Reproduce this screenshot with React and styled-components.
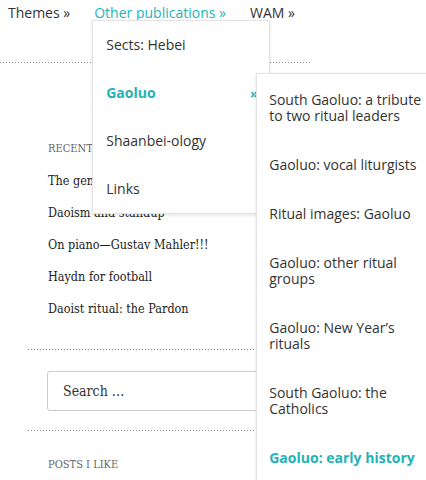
import styled, { createGlobalStyle } from 'styled-components';

const GlobalStyle = createGlobalStyle`
  html, body {
    margin: 0;
    padding: 0;
    background: #fff;
  }
  body {
    width: 426px;
    height: 480px;
    overflow: hidden;
  }
`;

const teal = '#1fb3b6';
const serif = `'DejaVu Serif Condensed', 'DejaVu Serif', serif`;

const recent = [
  'The genius of Li Manshan',
  'Daoism and standup',
  'On piano—Gustav Mahler!!!',
  'Haydn for football',
  'Daoist ritual: the Pardon',
];

const gaoluo = [
  'South Gaoluo: a tribute to two ritual leaders',
  'Gaoluo: vocal liturgists',
  'Ritual images: Gaoluo',
  'Gaoluo: other ritual groups',
  'Gaoluo: New Year’s rituals',
  'South Gaoluo: the Catholics',
  'Gaoluo: early history',
];

const App = () => {
  return (
    <>
      <GlobalStyle />
      <Page>
        <Header>
          <Nav>
            <NavItem>Themes »</NavItem>
            <NavItem $active>
              Other publications »
              <Dropdown>
                <MenuItem>Sects: Hebei</MenuItem>
                <MenuItem $active>
                  Gaoluo <span>»</span>
                  <SubMenu>
                    {gaoluo.map((t, i) => (
                      <SubItem key={t} $active={i === gaoluo.length - 1}>
                        {t}
                      </SubItem>
                    ))}
                  </SubMenu>
                </MenuItem>
                <MenuItem>Shaanbei-ology</MenuItem>
                <MenuItem>Links</MenuItem>
              </Dropdown>
            </NavItem>
            <NavItem>WAM »</NavItem>
          </Nav>
        </Header>
        <Sidebar>
          <Widget>
            <WidgetTitle>Recent Posts</WidgetTitle>
            <PostList>
              {recent.map((t) => (
                <li key={t}>{t}</li>
              ))}
            </PostList>
          </Widget>
          <Rule />
          <SearchWidget>
            <SearchInput placeholder="Search …" />
          </SearchWidget>
          <Rule />
          <Widget>
            <WidgetTitle>Posts I Like</WidgetTitle>
          </Widget>
        </Sidebar>
      </Page>
    </>
  );
};

const Page = styled.div`
  position: relative;
  width: 426px;
  height: 480px;
  overflow: hidden;
`;

const Header = styled.header`
  width: 312px;
  height: 63px;
  background-image: linear-gradient(to right, #8a8a8a 1px, transparent 1px);
  background-size: 3px 1px;
  background-repeat: repeat-x;
  background-position: 0 bottom;
`;

const Nav = styled.ul`
  display: flex;
  gap: 24px;
  margin: 0;
  padding: 0 0 0 8px;
  list-style: none;
  font-family: 'Open Sans', sans-serif;
  font-size: 14px;
  line-height: 26px;
`;

const NavItem = styled.li`
  position: relative;
  color: ${(p) => (p.$active ? teal : '#333')};
  white-space: nowrap;
`;

const Dropdown = styled.ul`
  position: absolute;
  left: -2px;
  top: 20px;
  z-index: 5;
  width: 176px;
  margin: 0;
  padding: 0;
  list-style: none;
  background: #fff;
  border: 1px solid #e4e4e4;
  box-shadow: 0 1px 3px rgba(0, 0, 0, 0.12);
`;

const MenuItem = styled.li`
  position: relative;
  display: flex;
  justify-content: space-between;
  align-items: center;
  height: 48px;
  padding: 0 11px 0 13px;
  color: ${(p) => (p.$active ? teal : '#333')};
  font-weight: ${(p) => (p.$active ? 700 : 400)};
  span {
    font-size: 13px;
    font-weight: 700;
  }
`;

const SubMenu = styled.ul`
  position: absolute;
  left: 163px;
  top: 4px;
  z-index: 6;
  width: 180px;
  margin: 0;
  padding: 0;
  list-style: none;
  background: #fff;
  border: 1px solid #e4e4e4;
  box-shadow: 0 1px 3px rgba(0, 0, 0, 0.12);
  font-weight: 400;
`;

const SubItem = styled.li`
  padding: 18px 10px 15px 12px;
  line-height: 16px;
  white-space: normal;
  color: ${(p) => (p.$active ? teal : '#333')};
  font-weight: ${(p) => (p.$active ? 700 : 400)};
`;

const Sidebar = styled.aside`
  width: 380px;
  padding-left: 28px;
  font-family: ${serif};
  color: #222;
`;

const Widget = styled.section`
  padding: 78px 0 0 20px;
  &:last-child {
    padding-top: 26px;
  }
`;

const WidgetTitle = styled.h3`
  margin: 0 0 16px;
  font-size: 11px;
  font-weight: 400;
  line-height: 16px;
  text-transform: uppercase;
  color: #666;
`;

const PostList = styled.ul`
  margin: 0 0 32px;
  padding: 0;
  list-style: none;
  font-size: 12.5px;
  line-height: 16px;
  li {
    margin-bottom: 16px;
    white-space: nowrap;
  }
  li:last-child {
    margin-bottom: 0;
  }
`;

const Rule = styled.div`
  height: 1px;
  background-image: linear-gradient(to right, #8a8a8a 1px, transparent 1px);
  background-size: 3px 1px;
  background-repeat: repeat-x;
`;

const SearchWidget = styled.div`
  padding: 21px 0 19px 19px;
`;

const SearchInput = styled.input`
  box-sizing: border-box;
  width: 330px;
  height: 40px;
  padding: 0 15px;
  border: 1px solid #ccc;
  border-radius: 3px;
  font-family: ${serif};
  font-size: 14px;
  color: #333;
  &::placeholder {
    color: #333;
  }
`;

export default App;
